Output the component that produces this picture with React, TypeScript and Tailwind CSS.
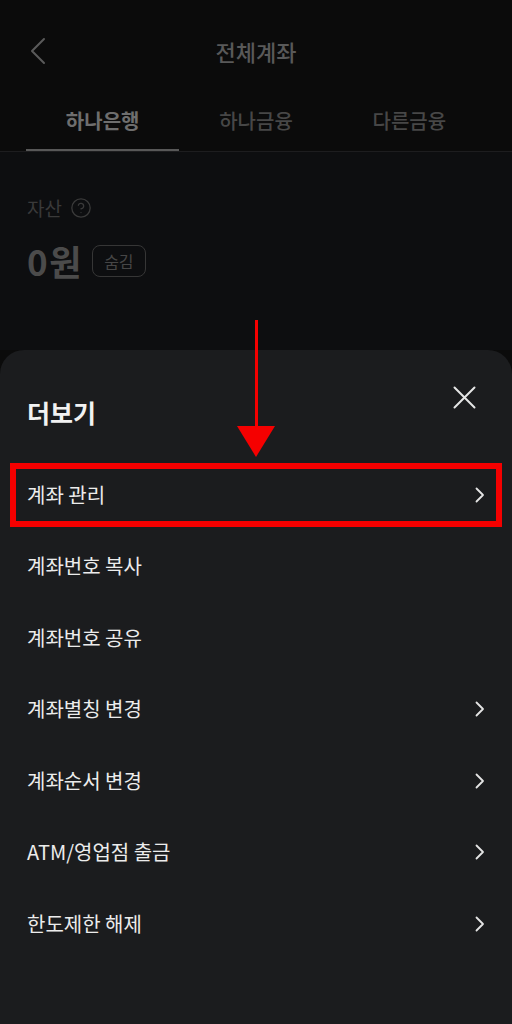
import { CircleHelp } from "lucide-react";

const rows = [
	{ label: "계좌 관리", arrow: true, marked: true },
	{ label: "계좌번호 복사", arrow: false },
	{ label: "계좌번호 공유", arrow: false },
	{ label: "계좌별칭 변경", arrow: true },
	{ label: "계좌순서 변경", arrow: true },
	{ label: "ATM/영업점 출금", arrow: true },
	{ label: "한도제한 해제", arrow: true },
];

const tabs = ["하나은행", "하나금융", "다른금융"];

function Chevron() {
	return (
		<svg width="10" height="16" viewBox="0 0 10 16" fill="none">
			<path
				d="M1.5 1.5 L8 8 L1.5 14.5"
				stroke="#e4e4e4"
				strokeWidth="1.8"
				strokeLinecap="round"
				strokeLinejoin="round"
			/>
		</svg>
	);
}

function MenuRow({ label, arrow }: { label: string; arrow: boolean }) {
	return (
		<div className="h-[71.5px] flex items-center justify-between px-[27px]">
			<span className="text-[20px] leading-[28px] text-[#ececec]">{label}</span>
			{arrow && <Chevron />}
		</div>
	);
}

function MarkedRow({ label }: { label: string }) {
	return (
		<div className="h-[71.5px] flex items-center px-[10px]">
			<div className="h-[64px] w-full border-[6px] border-[#f50000] flex items-center justify-between pl-[11px] pr-[11px]">
				<span className="text-[20px] leading-[28px] text-[#ececec]">
					{label}
				</span>
				<Chevron />
			</div>
		</div>
	);
}

export default function App() {
	return (
		<div
			className="relative h-[1024px] w-[512px] overflow-hidden bg-[#0b0b0b] flex flex-col"
			style={{ fontFamily: '"Noto Sans CJK KR", "Noto Sans", sans-serif' }}
		>
			{/* top bar */}
			<div className="relative h-[102px] flex items-center justify-center shrink-0">
				<svg
					className="absolute left-[30px] top-[37px]"
					width="16"
					height="28"
					viewBox="0 0 16 28"
					fill="none"
				>
					<path
						d="M14 2 L2 14 L14 26"
						stroke="#5a5a5a"
						strokeWidth="2"
						strokeLinecap="round"
						strokeLinejoin="round"
					/>
				</svg>
				<span className="text-[22px] leading-[30px] font-medium text-[#595959]">
					전체계좌
				</span>
			</div>

			{/* tabs */}
			<div className="shrink-0 border-b border-[#1d1d1f]">
				<div className="grid grid-cols-3 px-[26px]">
					{tabs.map((tab, index) => (
						<div key={index} className="flex flex-col">
							<div
								className={
									index === 0
										? "h-[38px] flex items-center justify-center text-[20px] font-bold text-[#6e6e6e]"
										: "h-[38px] flex items-center justify-center text-[20px] font-medium text-[#474747]"
								}
							>
								{tab}
							</div>
							<div className="h-[9px]" />
							<div
								className={
									index === 0 ? "h-[2px] bg-[#585858]" : "h-[2px]"
								}
							/>
						</div>
					))}
				</div>
			</div>

			{/* assets */}
			<div className="h-[198px] shrink-0 bg-[#0d0e10] px-[27px] pt-[43px]">
				<div className="flex items-center gap-[8px] h-[26px]">
					<span className="text-[19px] leading-[26px] text-[#3a3a3a]">자산</span>
					<CircleHelp size={22} strokeWidth={1.4} color="#3a3a3a" />
				</div>
				<div className="mt-[24px] flex items-center gap-[9px] h-[32px]">
					<span className="text-[35px] leading-[32px] font-bold tracking-[1.5px] text-[#4b4b4b]">
						0원
					</span>
					<span className="h-[32px] w-[54px] flex items-center justify-center rounded-[8px] border border-[#363636] text-[16px] text-[#464646]">
						숨김
					</span>
				</div>
			</div>

			{/* bottom sheet */}
			<div className="flex-1 rounded-t-[24px] bg-[#1b1c1e] flex flex-col">
				<div className="h-[109px] flex items-start justify-between pl-[27px] pr-[36px] shrink-0">
					<span className="mt-[46px] text-[25px] leading-[32px] font-bold text-[#f2f2f2]">
						더보기
					</span>
					<svg
						className="mt-[36px]"
						width="23"
						height="23"
						viewBox="0 0 23 23"
						fill="none"
					>
						<path
							d="M1.5 1.5 L21.5 21.5 M21.5 1.5 L1.5 21.5"
							stroke="#e6e6e6"
							strokeWidth="2"
							strokeLinecap="round"
						/>
					</svg>
				</div>
				{rows.map((row, index) =>
					row.marked ? (
						<MarkedRow key={index} label={row.label} />
					) : (
						<MenuRow key={index} label={row.label} arrow={row.arrow} />
					),
				)}
			</div>

			{/* annotation arrow */}
			<div className="absolute left-[254.5px] top-[320px] w-[3px] h-[108px] bg-[#f50000]" />
			<svg
				className="absolute left-[237px] top-[426px]"
				width="38"
				height="31"
				viewBox="0 0 38 31"
			>
				<polygon points="0,0 38,0 19,31" fill="#f50000" />
			</svg>
		</div>
	);
}
